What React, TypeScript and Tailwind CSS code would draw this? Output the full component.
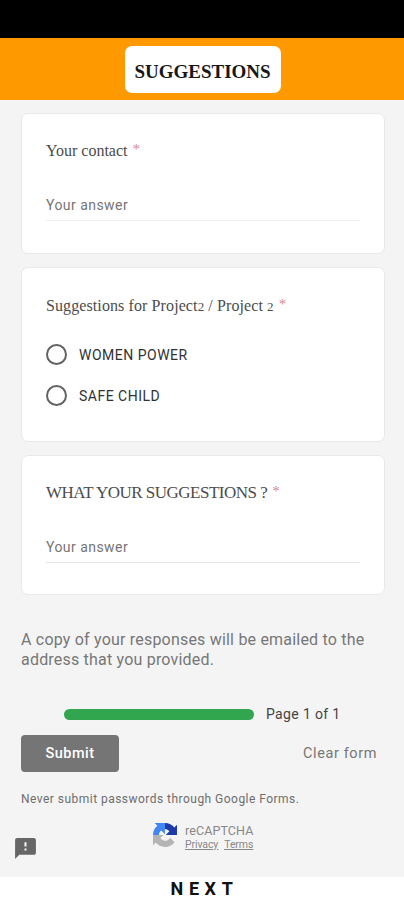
import React from 'react'
import { MdFeedback } from 'react-icons/md'

function Question({ title, className, children }: { title: React.ReactNode, className: string, children: React.ReactNode }) {
    return (
        <div className={`w-[364px] rounded-[7px] border border-[#e9e9e9] bg-white pl-6 pr-6 ${className}`}>
            <h2 className="font-['Liberation_Serif',serif] text-[16px] leading-6 whitespace-nowrap text-[#4c4c4c]">{title}</h2>
            {children}
        </div>
    )
}

function Required() {
    return <span className="ml-[5px] inline-block -translate-y-0.5 text-[15px] tracking-normal text-[#d98a90]">*</span>
}

function Answer({ className }: { className: string }) {
    return (
        <input
            type="text"
            placeholder="Your answer"
            className={`block w-full h-7 border-b pb-[3px] text-[14px] tracking-[0.45px] outline-none placeholder:text-[#757575] ${className}`}
        />
    )
}

function Option({ label }: { label: string }) {
    return (
        <label className="flex h-[41px] items-center">
            <span className="h-[21px] w-[21px] rounded-full border-2 border-[#626262]"></span>
            <span className="ml-3 text-[14px] leading-5 tracking-[0.5px] text-[#303134]">{label}</span>
        </label>
    )
}

function RecaptchaLogo() {
    return (
        <svg className="h-6 w-6" viewBox="0 0 64 64">
            <path fill="#1c3aa9" d="M64 31.955a33 33 0 0 0-.023-1.364V4.639l-7.174 7.174C50.933 4.627 42.003.027 31.999.027v15.88c4.84.09 9.13 2.56 11.73 6.32l-9.6 9.6H64z" />
            <path fill="#4285f4" d="M31.862.005q-.684.002-1.364.024H4.546l7.174 7.174C4.534 13.073 0 22.003 0 32.005h15.82c.09-4.84 2.47-9.13 6.23-11.73l9.68 9.6z" />
            <path fill="#b4b4b4" d="M.001 31.955q.003.686.024 1.364v25.952l7.174-7.174C13.069 59.283 21.999 63.883 32.003 63.883c10.41 0 19.66-4.98 25.49-12.69L45.73 39.31a15.6 15.6 0 0 1-4.77 5.35c-2 1.56-4.82 2.83-8.73 2.83-.47 0-.84-.06-1.1-.16-4.84-.38-9.14-3.05-11.67-7.02l8.3-8.35z" />
        </svg>
    )
}

export default function App() {
    return (
        <div className="flex h-[900px] w-[404px] flex-col overflow-hidden bg-white font-['Roboto',sans-serif]">
            <div className="h-[38px] shrink-0 bg-black"></div>
            <header className="flex h-[62px] shrink-0 justify-center bg-[#ff9900] pt-2 pl-px">
                <div className="flex h-[47px] w-[156px] items-center justify-center rounded-[7px] bg-white">
                    <h1 className="pt-1 font-['Liberation_Serif',serif] text-[19px] leading-6 font-bold text-[#171717]">SUGGESTIONS</h1>
                </div>
            </header>

            <main className="flex h-[777px] shrink-0 flex-col bg-[#f4f4f4] px-[21px] pt-[13px]">
                <Question title={<><span>Your contact</span><Required /></>} className="h-[141px] pt-[25px]">
                    <Answer className="mt-[30px] border-[#eeeeee]" />
                </Question>
                <Question
                    title={<><span className="tracking-[0.1px]">Suggestions for Project<small className="text-[13px]">2</small> / Project <small className="text-[13px]">2</small></span><Required /></>}
                    className="mt-[13px] h-[175px] pt-[26px]"
                >
                    <div className="mt-[15px]">
                        <Option label="WOMEN POWER" />
                        <Option label="SAFE CHILD" />
                    </div>
                </Question>
                <Question title={<><span className="text-[17px] tracking-[-0.5px]">WHAT YOUR SUGGESTIONS ?</span><Required /></>} className="mt-[13px] h-[140px] pt-[25px]">
                    <Answer className="mt-[30px] border-[#e5e5e5]" />
                </Question>

                <p className="mt-[35px] text-[16px] leading-5 tracking-[0.2px] whitespace-nowrap text-[#777777]">
                    A copy of your responses will be emailed to the<br />address that you provided.
                </p>

                <div className="mt-[34px] flex h-5 items-center pl-[43px]">
                    <div className="h-[11px] w-[190px] rounded-full bg-[#32a64e]"></div>
                    <span className="ml-3 text-[14px] tracking-[0.35px] text-[#444444]">Page 1 of 1</span>
                </div>
                <div className="mt-[11px] flex h-[37px] items-center justify-between pr-[6px]">
                    <button className="h-[37px] w-[98px] rounded-[4px] bg-[#757575] text-[14.5px] font-medium tracking-[0.5px] text-white">Submit</button>
                    <button className="text-[14.5px] tracking-[0.6px] text-[#777777]">Clear form</button>
                </div>
                <p className="mt-[19px] text-[12px] leading-4 tracking-[0.47px] whitespace-nowrap text-[#6e6e6e]">Never submit passwords through Google Forms.</p>

                <div className="mt-[15px] flex">
                    <MdFeedback className="mt-[14px] -ml-[8px] h-[25px] w-[25px] text-[#666666]" />
                    <div className="ml-[115px] flex pt-px">
                        <RecaptchaLogo />
                        <div className="ml-2 pt-px text-[#888888]">
                            <p className="text-[12.5px] leading-[14px] tracking-[0.1px]">reCAPTCHA</p>
                            <p className="flex gap-1.5 text-[10.5px] leading-[13px] tracking-[-0.1px] underline"><a>Privacy</a><a>Terms</a></p>
                        </div>
                    </div>
                </div>
            </main>

            <footer className="flex h-[23px] shrink-0 items-center justify-center pl-[5px]">
                <span className="text-[18px] leading-6 font-bold tracking-[5.6px] text-[#111111]">NEXT</span>
            </footer>
        </div>
    )
}
